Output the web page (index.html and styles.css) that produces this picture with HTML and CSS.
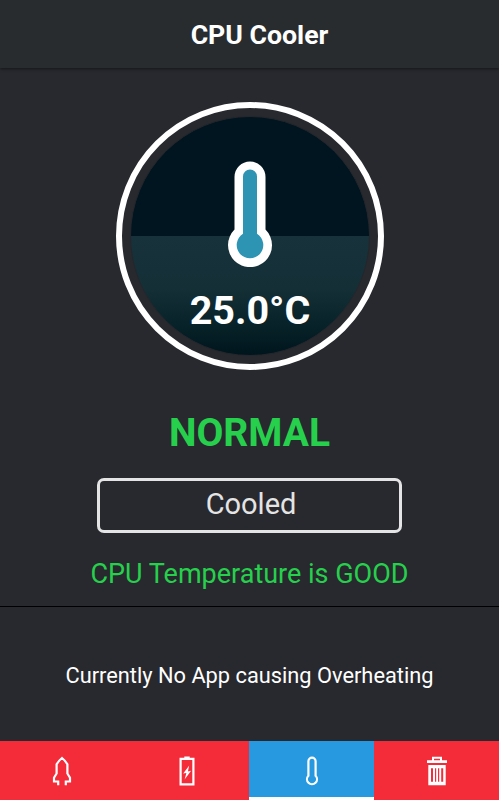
FILE: index.html
```
<!DOCTYPE html>
<html lang="en">
<head>
    <meta charset="UTF-8">
    <meta name="viewport" content="width=device-width, initial-scale=1.0">
    <title>CPU Cooler</title>
    <link rel="stylesheet" href="styles.css">
</head>
<body>

    <header class="header">
        <h1>CPU Cooler</h1>
    </header>

    <!-- Temperature gauge -->
    <main class="cooler">
        <div class="gauge">
            <div class="gauge-inner">
                <svg class="thermometer" width="44" height="106" viewBox="0 0 44 106">
                    <path d="M6.5 16a15.5 15.5 0 0 1 31 0v52.5a22 22 0 1 1-31 0z" fill="#fff"/>
                    <path d="M15 15.5a7 7 0 0 1 14 0v57.2a13.3 13.3 0 1 1-14 0z" fill="#2e94b4"/>
                </svg>
                <span class="degrees">25.0°C</span>
            </div>
        </div>
        <h2 class="status">NORMAL</h2>
        <button class="cool-btn">Cooled</button>
        <p class="message">CPU Temperature is GOOD</p>
    </main>

    <!-- Overheating apps -->
    <section class="apps">
        <p>Currently No App causing Overheating</p>
    </section>

    <nav class="tabs">
        <a class="tab">
            <svg width="20" height="30" viewBox="0 0 20 30" fill="none" stroke="#fff" stroke-width="2.2">
                <path d="M6.2 29.3v-3.8H2v-3.7l2.6-4.3V8.3Q6.5 4.8 10 2q3.5 2.8 5.4 6.3v9.2l2.6 4.3v3.7h-4.2v3.8"/>
            </svg>
        </a>
        <a class="tab">
            <svg width="16" height="30" viewBox="0 0 16 30">
                <path d="M5.3.5h5.4v2H5.3z" fill="#fff"/>
                <path d="M1.6 2.9h12.8v25.4H1.6z" fill="none" stroke="#fff" stroke-width="2.2"/>
                <path d="M10.2 9.5l-6 8 3.2-.6-1.8 6.6 6.5-8.7-3.2.6z" fill="#fff"/>
            </svg>
        </a>
        <a class="tab active">
            <svg width="14" height="30" viewBox="0 0 14 30" fill="none" stroke="#fff" stroke-width="2.2">
                <path d="M3.4 5.2a3.6 3.6 0 0 1 7.2 0v14.5a5 5 0 1 1-7.2 0z"/>
            </svg>
        </a>
        <a class="tab">
            <svg width="22" height="30" viewBox="0 0 22 30">
                <path d="M6 4.3V.8h10v3.5h5v2.8H1V4.3zM8 2.7v1.6h6V2.7z" fill="#fff" fill-rule="evenodd"/>
                <path d="M2.3 9h17.4v20.3H2.3zM5 12.3v13.5h2V12.3zM9 12.3v13.5h1.2V12.3zM12 12.3v13.5h1.2V12.3zM15.2 12.3v13.5h2V12.3z" fill="#fff" fill-rule="evenodd"/>
            </svg>
        </a>
    </nav>

</body>
</html>
```
FILE: styles.css
```
* {
    box-sizing: border-box;
}
body {
    margin: 0;
    height: 800px;
    display: flex;
    flex-direction: column;
    background: #28292e;
    color: #fff;
    font-family: Roboto, sans-serif;
    overflow: hidden;
}
h1, h2, p {
    margin: 0;
    font-weight: normal;
    white-space: nowrap;
}
.header {
    height: 68px;
    padding: 2px 0 0 20px;
    display: flex;
    align-items: center;
    justify-content: center;
    background: #282c2f;
    box-shadow: 0 1px 3px rgba(0, 0, 0, 0.5);
}
.header h1 {
    font-size: 26.7px;
    line-height: 32px;
    font-weight: bold;
}
.cooler {
    height: 539px;
    padding-top: 34px;
    display: flex;
    flex-direction: column;
    align-items: center;
    border-bottom: 1px solid #000;
}
.gauge {
    width: 268px;
    height: 268px;
    margin-left: 1px;
    padding: 8px;
    border: 6px solid #fff;
    border-radius: 50%;
}
.gauge-inner {
    height: 100%;
    padding-top: 44px;
    display: flex;
    flex-direction: column;
    align-items: center;
    border: 1px solid #24262b;
    border-radius: 50%;
    background: linear-gradient(#00151f 50%, #17323b 50%, #152f37 72%, #08242a 86%, #00151d);
}
.degrees {
    margin-top: 20px;
    font-size: 39.5px;
    line-height: 47px;
    font-weight: bold;
}
.status {
    margin-top: 39px;
    font-size: 39px;
    line-height: 48px;
    font-weight: bold;
    color: #26d04c;
}
.cool-btn {
    width: 305px;
    height: 55px;
    margin-top: 21px;
    padding: 0 0 4px 3px;
    border: 3px solid #e4e4e4;
    border-radius: 7px;
    background: none;
    color: #e4e4e4;
    font-family: inherit;
    font-size: 29px;
}
.message {
    margin-top: 25px;
    font-size: 27px;
    line-height: 32px;
    color: #26d04c;
}
.apps {
    height: 134px;
    padding-top: 3px;
    display: flex;
    align-items: center;
    justify-content: center;
    font-size: 21.8px;
}
.tabs {
    height: 59px;
    display: grid;
    grid-template-columns: 124px 125px 125px 125px;
    background: #f42b39;
}
.tab {
    display: flex;
    align-items: center;
    justify-content: center;
}
.active {
    background: #2699e0;
    box-shadow: inset 0 -3px #fff;
}
```
